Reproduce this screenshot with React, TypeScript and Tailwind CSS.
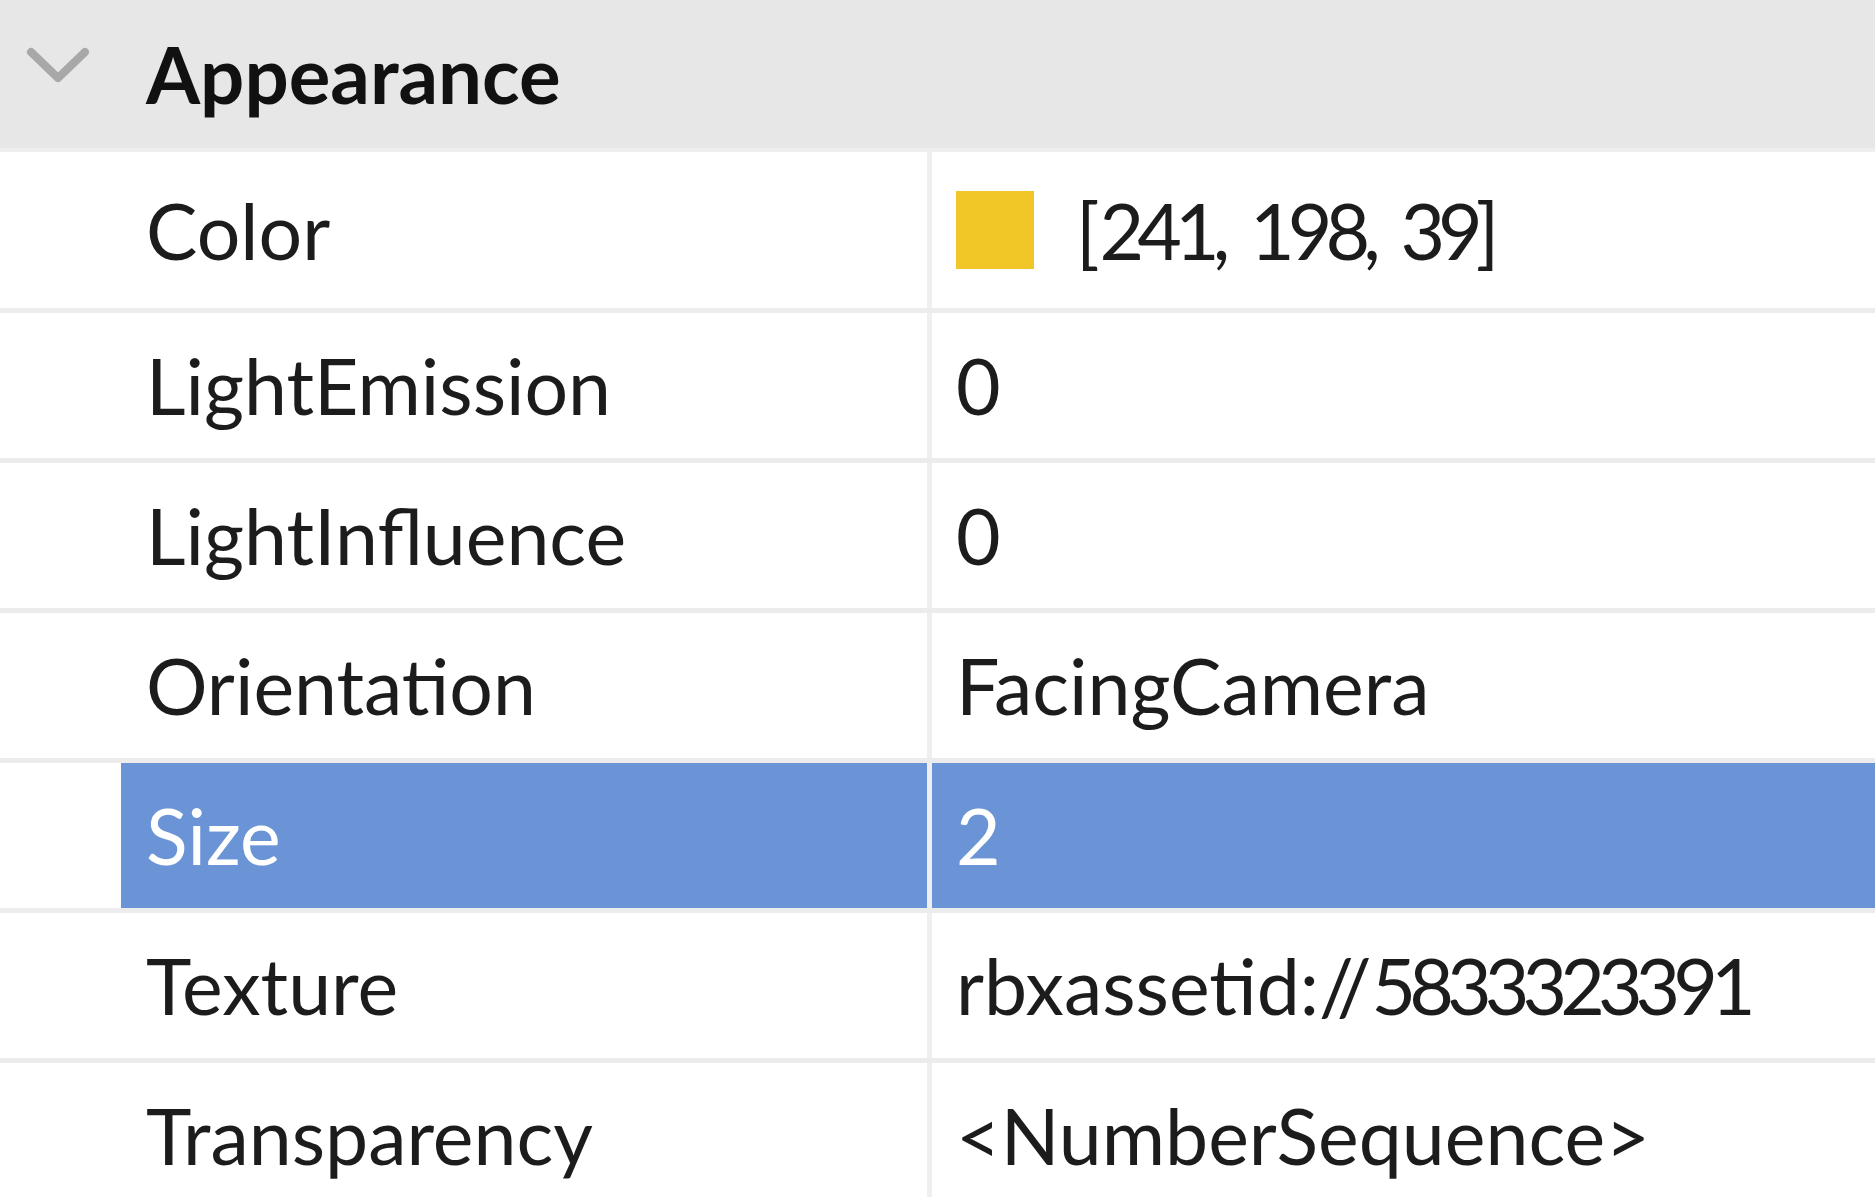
import React from "react";

type Prop = {
  name: string;
  value: string;
  swatch?: string;
  selected?: boolean;
  tall?: boolean;
};

const props: Prop[] = [
  { name: "Color", value: "[241, 198, 39]", swatch: "#f1c627", tall: true },
  { name: "LightEmission", value: "0" },
  { name: "LightInfluence", value: "0" },
  { name: "Orientation", value: "FacingCamera" },
  { name: "Size", value: "2", selected: true },
  { name: "Texture", value: "rbxassetid://5833323391" },
  { name: "Transparency", value: "<NumberSequence>" },
];

// studio font has narrow digits, tighten runs of numbers
const Value = ({ text }: { text: string }) => {
  const parts = text.split(/(\d+)/).filter(Boolean);
  return (
    <>
      {parts.map((s, i) =>
        /^\d+$/.test(s) && s.length > 1 ? (
          <span key={i} className="tracking-[-0.09em]">
            {s}
          </span>
        ) : (
          <span key={i}>{s}</span>
        )
      )}
    </>
  );
};

const Row = ({ p }: { p: Prop }) => {
  const text = p.selected ? "text-white" : "text-[#1c1c1c]";
  return (
    <div
      className={`flex shrink-0 border-b-[5px] border-[#ececec] ${
        p.tall ? "h-[161px]" : "h-[150px]"
      }`}
    >
      {/* name column */}
      <div className="w-[927px] shrink-0 pl-[121px] flex">
        <div
          className={`flex-1 flex items-center pl-[25px] ${
            p.selected ? "bg-[#6a94d6]" : ""
          }`}
        >
          <span className={`text-[77px] leading-none ${text}`}>{p.name}</span>
        </div>
      </div>

      {/* value column */}
      <div
        className={`flex-1 flex items-center border-l-[5px] border-[#efefef] pl-[24px] ${
          p.selected ? "bg-[#6a94d6]" : ""
        }`}
      >
        {p.swatch && (
          <div className="w-[78px] h-[78px] mr-[42px] shrink-0 bg-[#f1c627]" />
        )}
        <span className={`text-[77px] leading-none whitespace-nowrap ${text}`}>
          <Value text={p.value} />
        </span>
      </div>
    </div>
  );
};

export default function App() {
  return (
    <div className="w-full h-[1197px] overflow-hidden bg-white font-['Lato',sans-serif] flex flex-col">
      {/* Section header */}
      <div className="h-[152px] shrink-0 flex items-center bg-[#e7e7e7] border-b-[4px] border-[#eeeeee]">
        <div className="w-[146px] shrink-0 flex pl-[26px] mb-[18px]">
          <svg width="64" height="38" viewBox="0 0 64 38" fill="none">
            <path
              d="M5 6 L32 32 L59 6"
              stroke="#a8a8a8"
              strokeWidth="8"
              strokeLinecap="round"
              strokeLinejoin="round"
            />
          </svg>
        </div>
        <span className="text-[78px] font-bold leading-none text-[#111111]">
          Appearance
        </span>
      </div>

      {props.map((p) => (
        <Row key={p.name} p={p} />
      ))}
    </div>
  );
}
